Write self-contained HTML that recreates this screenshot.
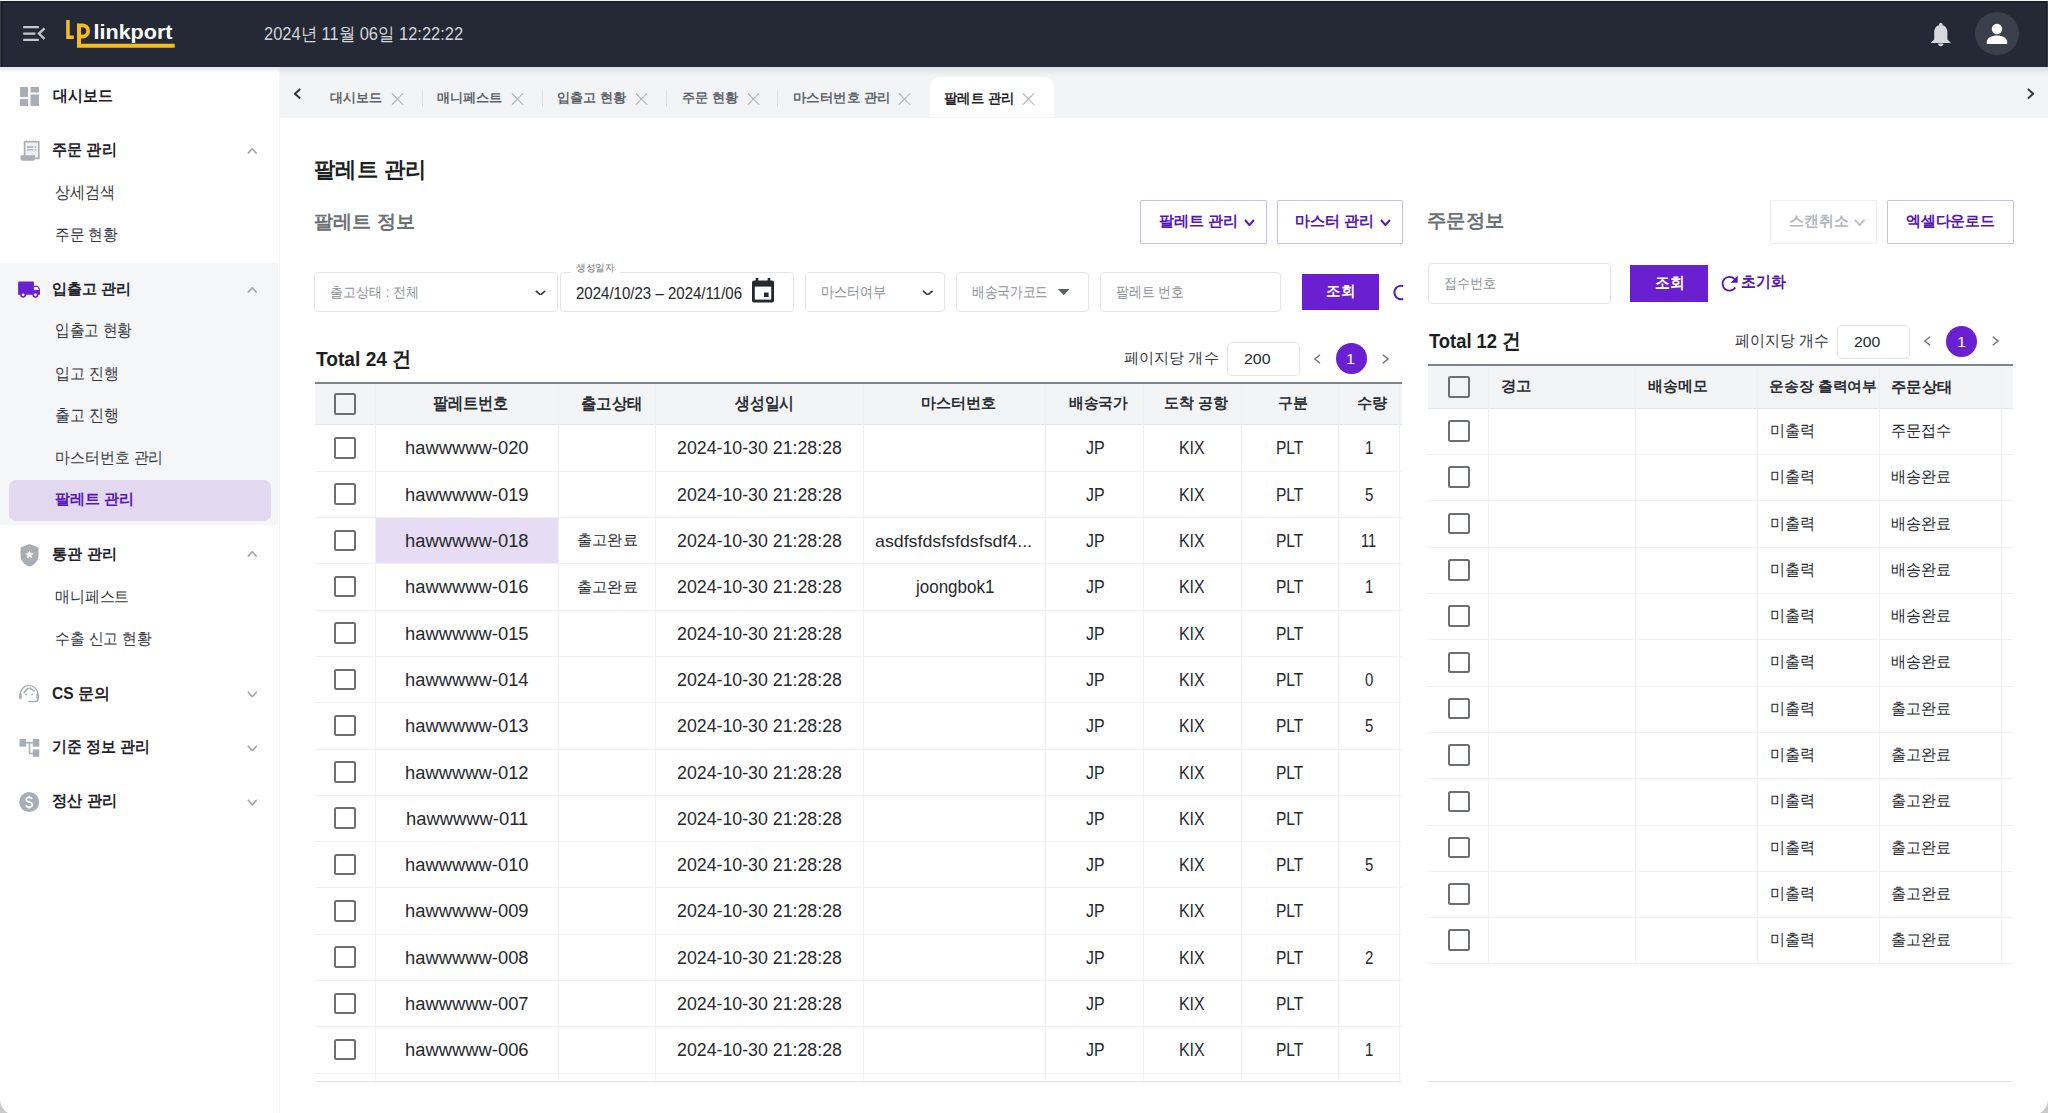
<!DOCTYPE html><html><head><meta charset="utf-8"><style>
*{margin:0;padding:0;box-sizing:border-box}
html,body{width:2048px;height:1113px;overflow:hidden;background:#fff;font-family:"Liberation Sans",sans-serif;color:#222}
.a{position:absolute}
.t{position:absolute;white-space:nowrap;line-height:1;transform-origin:0 0}
.chev{position:absolute;width:8px;height:8px;border-left:1.6px solid #9aa0a8;border-top:1.6px solid #9aa0a8}
.x{position:absolute;width:12px;height:12px}
.x:before,.x:after{content:"";position:absolute;left:5.35px;top:-2px;width:1.3px;height:16px;background:#a9acb1}
.x:before{transform:rotate(45deg)}
.x:after{transform:rotate(-45deg)}
.sep{position:absolute;top:89.5px;width:1px;height:17.5px;background:#dcdfe3}
.box{position:absolute;border:1px solid #e4e5e8;border-radius:4px;background:#fff}
.obtn{position:absolute;border:1px solid #cdbdef;border-radius:1px;background:#fff}
.pbtn{position:absolute;background:#6a1fd0}
.cb{position:absolute;width:21.5px;height:21.5px;border:2.2px solid #6b6e73;border-radius:2.5px}
.hl{position:absolute;height:1px;background:#eef0f2}
.vl{position:absolute;width:1px;background:#eff0f2}
</style></head><body>
<div class="a" style="left:0;top:1px;width:2048px;height:66px;background:#242935"></div>
<div class="a" style="left:1px;top:1px;width:1.5px;height:66px;background:#1a1e26"></div>
<svg class="a" style="left:22px;top:24px" width="24" height="20" viewBox="0 0 24 20"><g fill="none" stroke="#c4c7cc" stroke-width="2.3"><path d="M1.2 3.2h15.6M1.2 9.6h12.2M1.2 15.8h15.6"/><path d="M22.5 4.3l-5.6 5.3 5.6 5.3"/></g></svg>
<svg class="a" style="left:60px;top:12px" width="120" height="40" viewBox="0 0 120 40"><path d="M6.2 7.9h3.5v15.6h4.1v3.5H6.2z" fill="#f5bd22"/><path d="M17 11.4h5.5a7.5 7.5 0 0 1 0 15h-1.5v-3.8h1.5a3.7 3.7 0 0 0 0-7.4H21v16.5h93.7v4.1H17z" fill="#f5bd22"/><text x="33.5" y="27" font-family="Liberation Sans" font-weight="bold" font-size="20.5" fill="#fff" textLength="79" lengthAdjust="spacingAndGlyphs">linkport</text></svg>
<svg class="a" style="left:1930px;top:22px" width="22" height="25" viewBox="0 0 22 25"><circle cx="10.8" cy="2.4" r="1.7" fill="#d6d8db"/><path d="M10.8 3c-4.2 0-6.6 3.2-6.6 7.2v7.3L1 20.4v.6h19.6v-.6l-3.2-2.9v-7.3C17.4 6.2 15 3 10.8 3z" fill="#d6d8db"/><path d="M8.2 21.6h5.2a2.6 2.6 0 0 1-5.2 0z" fill="#d6d8db"/></svg>
<div class="a" style="left:1975px;top:11.5px;width:43.5px;height:43.5px;border-radius:50%;background:#3a3f49"></div>
<svg class="a" style="left:1985px;top:22px" width="24" height="24" viewBox="0 0 24 24"><circle cx="12" cy="7" r="5.2" fill="#fff"/><path d="M1.8 22V20c0-4.6 5-6.6 10.2-6.6S22.2 15.4 22.2 20v2z" fill="#fff"/></svg>
<div class="a" style="left:0;top:67px;width:280px;height:1046px;background:#fff"></div>
<div class="a" style="left:278.5px;top:67px;width:1.5px;height:1046px;background:#f5f6f7"></div>
<div class="a" style="left:0;top:262.5px;width:278px;height:262.5px;background:#f5f6f8"></div>
<div class="a" style="left:9.3px;top:479.8px;width:261.4px;height:41.2px;border-radius:7px;background:#e2d8f0"></div>
<svg class="a" style="left:20px;top:87px" width="19" height="19" viewBox="0 0 19 19" fill="#a8adb6"><rect x="0" y="0" width="8" height="10"/><rect x="10.5" y="0" width="8.5" height="5.5"/><rect x="10.5" y="7.5" width="8.5" height="11.5"/><rect x="0" y="12" width="8" height="7"/></svg>
<svg class="a" style="left:19.5px;top:140px" width="20" height="22" viewBox="0 0 20 22"><path d="M4.6 1.8h14.2v16.6H4.6z" fill="#eef0f3" stroke="#a8adb6" stroke-width="1.6"/><path d="M6 1h1.2M9 1h1.2M12 1h1.2M15 1h1.2" stroke="#a8adb6" stroke-width="1"/><path d="M7 7h6.2M7 9.8h6.2" stroke="#a8adb6" stroke-width="1.3"/><path d="M14.6 7h1.4M14.6 9.8h1.4" stroke="#a8adb6" stroke-width="1.3"/><path d="M0.6 15.2h14.4v3.6c0 1.2-.8 1.9-1.9 1.9H2.5c-1.2 0-1.9-.8-1.9-1.9z" fill="#a8adb6"/></svg>
<svg class="a" style="left:17px;top:280px" width="25" height="19" viewBox="0 0 25 19" fill="#6a1fd0"><path d="M1.1 2.9a1.4 1.4 0 0 1 1.4-1.4h14.4v13.3H1.1z"/><path d="M16.9 5.8h4l2.1 3.2v5.8h-6.1z"/><path d="M17.2 6.9h3.2l2 3.1h-5.2z" fill="#fff"/><circle cx="6.1" cy="14.8" r="3"/><circle cx="6.1" cy="14.8" r="1.4" fill="#fff"/><circle cx="18.4" cy="14.8" r="3"/><circle cx="18.4" cy="14.8" r="1.4" fill="#fff"/></svg>
<svg class="a" style="left:19.8px;top:544px" width="19" height="23" viewBox="0 0 19 23"><path d="M9.5 0L18.5 3.6v7.4c0 5.5-3.8 10.2-9 11.6C4.3 21.2.5 16.5.5 11V3.6z" fill="#a8adb6"/><path d="M9.5 6.3l1.3 2.8 3 .3-2.3 2 .7 3-2.7-1.6-2.7 1.6.7-3-2.3-2 3-.3z" fill="#fff"/></svg>
<svg class="a" style="left:17px;top:682px" width="24" height="22" viewBox="0 0 24 22" fill="none"><path d="M3.35 14.5V12.05A8.7 8.7 0 0 1 20.75 12.05V17.6Q20.75 19.5 18.85 19.5H11.3" stroke="#a8adb6" stroke-width="1.4"/><rect x="2.1" y="11.2" width="2.6" height="6" rx="1.2" fill="#a8adb6"/><rect x="19.4" y="11.2" width="2.6" height="6" rx="1.2" fill="#a8adb6"/><path d="M6.6 10.8L11.6 5.8M12.6 5.8L17.6 9.4" stroke="#a8adb6" stroke-width="1.7"/><circle cx="9" cy="12.4" r="0.95" fill="#a8adb6"/><circle cx="15.1" cy="12.4" r="0.95" fill="#a8adb6"/></svg>
<svg class="a" style="left:18.7px;top:739px" width="21" height="18" viewBox="0 0 21 18" fill="#a8adb6"><rect x="0.5" y="0" width="6.6" height="7.7"/><rect x="13.8" y="0" width="6.5" height="7.7"/><rect x="13.8" y="10.4" width="6.5" height="7.4"/><path d="M7.1 3.8H13.8M10.5 3.8V14.4H13.8" stroke="#a8adb6" stroke-width="1.5" fill="none"/></svg>
<svg class="a" style="left:18.7px;top:792.2px" width="21" height="21" viewBox="0 0 21 21"><circle cx="10.2" cy="10.1" r="10" fill="#a8adb6"/><path d="M13.2 6.9c-.5-.9-1.6-1.5-3-1.5-1.8 0-3 .9-3 2.3 0 3 6.2 1.6 6.2 4.9 0 1.5-1.3 2.5-3.2 2.5-1.5 0-2.8-.7-3.3-1.8M10.2 3.8v1.6M10.2 15.1v1.6" stroke="#fff" stroke-width="1.7" fill="none"/></svg>
<svg class="a" style="left:246.8px;top:147.8px" width="10.4" height="6.4" viewBox="0 0 10.4 6.4"><path d="M0.8 5.6000000000000005L5.2 0.8L9.6 5.6000000000000005" fill="none" stroke="#9ea3ab" stroke-width="1.6"/></svg>
<svg class="a" style="left:246.8px;top:287px" width="10.4" height="6.4" viewBox="0 0 10.4 6.4"><path d="M0.8 5.6000000000000005L5.2 0.8L9.6 5.6000000000000005" fill="none" stroke="#9ea3ab" stroke-width="1.6"/></svg>
<svg class="a" style="left:246.8px;top:551px" width="10.4" height="6.4" viewBox="0 0 10.4 6.4"><path d="M0.8 5.6000000000000005L5.2 0.8L9.6 5.6000000000000005" fill="none" stroke="#9ea3ab" stroke-width="1.6"/></svg>
<svg class="a" style="left:246.6px;top:690.5px" width="10.6" height="6.6" viewBox="0 0 10.6 6.6"><path d="M0.8 0.8L5.3 5.8L9.799999999999999 0.8" fill="none" stroke="#9ea3ab" stroke-width="1.6"/></svg>
<svg class="a" style="left:246.6px;top:744.8px" width="10.6" height="6.6" viewBox="0 0 10.6 6.6"><path d="M0.8 0.8L5.3 5.8L9.799999999999999 0.8" fill="none" stroke="#9ea3ab" stroke-width="1.6"/></svg>
<svg class="a" style="left:246.6px;top:799px" width="10.6" height="6.6" viewBox="0 0 10.6 6.6"><path d="M0.8 0.8L5.3 5.8L9.799999999999999 0.8" fill="none" stroke="#9ea3ab" stroke-width="1.6"/></svg>
<div class="a" style="left:280px;top:67px;width:1768px;height:50.5px;background:#f3f4f6"></div>
<div class="a" style="left:280px;top:67px;width:1768px;height:9px;background:linear-gradient(#dcdfe3,rgba(243,244,246,0))"></div>
<div class="a" style="left:0;top:67px;width:280px;height:6px;background:linear-gradient(#e3e5e8,rgba(255,255,255,0))"></div>
<svg class="a" style="left:293.5px;top:87.7px" width="7.2" height="11.5" viewBox="0 0 7.2 11.5"><path d="M6.25 0.95L0.95 5.75L6.25 10.55" fill="none" stroke="#2f3338" stroke-width="1.9"/></svg>
<svg class="a" style="left:2027.3px;top:87.7px" width="7.2" height="11.5" viewBox="0 0 7.2 11.5"><path d="M0.95 0.95L6.25 5.75L0.95 10.55" fill="none" stroke="#2f3338" stroke-width="1.9"/></svg>
<div class="a" style="left:929.8px;top:77.1px;width:124.6px;height:40.4px;background:#fff;border-radius:9px 9px 0 0"></div>
<div class="x" style="left:391.2px;top:93px"></div>
<div class="x" style="left:511.20000000000005px;top:93px"></div>
<div class="x" style="left:636px;top:93px"></div>
<div class="x" style="left:747.2px;top:93px"></div>
<div class="x" style="left:898.3px;top:93px"></div>
<div class="x" style="left:1022.9000000000001px;top:93px"></div>
<div class="sep" style="left:421.5px"></div>
<div class="sep" style="left:541.8px"></div>
<div class="sep" style="left:666.2px"></div>
<div class="sep" style="left:777.3px"></div>
<div class="obtn" style="left:1140.3px;top:199.8px;width:126.4px;height:43.8px"></div>
<div class="obtn" style="left:1276.6px;top:199.8px;width:126.8px;height:43.8px"></div>
<div class="obtn" style="left:1769.6px;top:200px;width:107.9px;height:43.7px;border-color:#eceef1"></div>
<div class="obtn" style="left:1887px;top:200px;width:127px;height:43.7px"></div>
<svg class="a" style="left:1244.2px;top:218.7px" width="10.9" height="7.1" viewBox="0 0 10.9 7.1"><path d="M1.0 1.0L5.45 6.1L9.9 1.0" fill="none" stroke="#5516b8" stroke-width="2"/></svg>
<svg class="a" style="left:1380.2px;top:218.7px" width="10.9" height="7.1" viewBox="0 0 10.9 7.1"><path d="M1.0 1.0L5.45 6.1L9.9 1.0" fill="none" stroke="#5516b8" stroke-width="2"/></svg>
<svg class="a" style="left:1853.9px;top:218.5px" width="11.4" height="7" viewBox="0 0 11.4 7"><path d="M0.9 0.9L5.7 6.1L10.5 0.9" fill="none" stroke="#b9bcc1" stroke-width="1.8"/></svg>
<div class="box" style="left:314.3px;top:271.6px;width:243.4px;height:40.8px"></div>
<svg class="a" style="left:534.5px;top:289.7px" width="11" height="5.8" viewBox="0 0 11 5.8"><path d="M0.85 0.85L5.5 4.95L10.15 0.85" fill="none" stroke="#3a3e44" stroke-width="1.7"/></svg>
<div class="box" style="left:559.6px;top:271.6px;width:234.9px;height:40.8px"></div>
<div class="a" style="left:571px;top:266px;width:49px;height:9px;background:#fff"></div>
<svg class="a" style="left:751.8px;top:278.2px" width="22" height="25" viewBox="0 0 22 25"><path d="M5 0v4M17 0v4" stroke="#25282d" stroke-width="2.6"/><rect x="0" y="2.6" width="22" height="21.8" rx="2" fill="#25282d"/><rect x="2.8" y="8.6" width="16.4" height="13" fill="#fff"/><rect x="12" y="14.5" width="4.6" height="4.6" fill="#25282d"/></svg>
<div class="box" style="left:804.8px;top:271.6px;width:140.3px;height:40.8px"></div>
<svg class="a" style="left:921.5px;top:289.7px" width="11.5" height="5.8" viewBox="0 0 11.5 5.8"><path d="M0.85 0.85L5.75 4.95L10.65 0.85" fill="none" stroke="#3a3e44" stroke-width="1.7"/></svg>
<div class="box" style="left:955.6px;top:271.6px;width:133.6px;height:40.8px"></div>
<svg class="a" style="left:1058.2px;top:289.2px" width="11.5" height="6.3" viewBox="0 0 11.5 6.3"><path d="M0 0h11.5L5.75 6.3z" fill="#5c6067"/></svg>
<div class="box" style="left:1099.7px;top:271.6px;width:181.6px;height:40.8px"></div>
<div class="pbtn" style="left:1302px;top:274px;width:77.3px;height:36.4px"></div>
<svg class="a" style="left:1391.5px;top:283.8px" width="12" height="17" viewBox="0 0 12 17"><path d="M11.2 2A6.8 6.8 0 1 0 11.2 15" fill="none" stroke="#5520b8" stroke-width="2"/></svg>
<div class="box" style="left:1427.7px;top:263px;width:183px;height:41px"></div>
<div class="pbtn" style="left:1630px;top:265.1px;width:77.6px;height:36.8px"></div>
<svg class="a" style="left:1721px;top:275px" width="18" height="17" viewBox="0 0 18 17"><path d="M13.4 3.9A6.9 6.9 0 1 0 14.3 12.4" fill="none" stroke="#5516b8" stroke-width="1.8"/><path d="M16.7 0.6V7.7H9.6z" fill="#5516b8"/></svg>
<div class="box" style="left:1227.2px;top:341.7px;width:72.5px;height:34.0px;border-radius:5px"></div>
<svg class="a" style="left:1313.9px;top:354.1px" width="6.8" height="10" viewBox="0 0 6.8 10"><path d="M6.05 0.75L0.75 5.0L6.05 9.25" fill="none" stroke="#6f737a" stroke-width="1.5"/></svg>
<div class="a" style="left:1335.6px;top:342.6px;width:31.4px;height:31.4px;border-radius:50%;background:#6a1fd0"></div>
<svg class="a" style="left:1382.4px;top:354.1px" width="6.8" height="10" viewBox="0 0 6.8 10"><path d="M0.75 0.75L6.05 5.0L0.75 9.25" fill="none" stroke="#6f737a" stroke-width="1.5"/></svg>
<div class="box" style="left:1837.3px;top:325.3px;width:73.1px;height:33.3px;border-radius:5px"></div>
<svg class="a" style="left:1924.4px;top:336.3px" width="6.8" height="10" viewBox="0 0 6.8 10"><path d="M6.05 0.75L0.75 5.0L6.05 9.25" fill="none" stroke="#6f737a" stroke-width="1.5"/></svg>
<div class="a" style="left:1946.1px;top:325.8px;width:31.4px;height:31.4px;border-radius:50%;background:#6a1fd0"></div>
<svg class="a" style="left:1991.9px;top:336.3px" width="6.8" height="10" viewBox="0 0 6.8 10"><path d="M0.75 0.75L6.05 5.0L0.75 9.25" fill="none" stroke="#6f737a" stroke-width="1.5"/></svg>
<div class="a" style="left:314.5px;top:381.8px;width:1087.9px;height:2px;background:#7f858e"></div>
<div class="a" style="left:314.5px;top:383.8px;width:1087.9px;height:40.6px;background:#f3f4f6"></div>
<div class="hl" style="left:314.5px;top:424.4px;width:1087.9px;background:#e4e6e9"></div>
<div class="a" style="left:375.5px;top:518.0px;width:182.9px;height:45.3px;background:#e6dcf4"></div>
<div class="hl" style="left:314.5px;top:470.7px;width:1087.9px"></div>
<div class="hl" style="left:314.5px;top:517.0px;width:1087.9px"></div>
<div class="hl" style="left:314.5px;top:563.3px;width:1087.9px"></div>
<div class="hl" style="left:314.5px;top:609.6px;width:1087.9px"></div>
<div class="hl" style="left:314.5px;top:655.9px;width:1087.9px"></div>
<div class="hl" style="left:314.5px;top:702.2px;width:1087.9px"></div>
<div class="hl" style="left:314.5px;top:748.5px;width:1087.9px"></div>
<div class="hl" style="left:314.5px;top:794.8px;width:1087.9px"></div>
<div class="hl" style="left:314.5px;top:841.1px;width:1087.9px"></div>
<div class="hl" style="left:314.5px;top:887.4px;width:1087.9px"></div>
<div class="hl" style="left:314.5px;top:933.7px;width:1087.9px"></div>
<div class="hl" style="left:314.5px;top:980.0px;width:1087.9px"></div>
<div class="hl" style="left:314.5px;top:1026.3px;width:1087.9px"></div>
<div class="hl" style="left:314.5px;top:1072.6px;width:1087.9px"></div>
<div class="vl" style="left:375.0px;top:383.8px;height:697.4px"></div>
<div class="vl" style="left:557.9px;top:383.8px;height:697.4px"></div>
<div class="vl" style="left:655.3px;top:383.8px;height:697.4px"></div>
<div class="vl" style="left:862.6px;top:383.8px;height:697.4px"></div>
<div class="vl" style="left:1045.3px;top:383.8px;height:697.4px"></div>
<div class="vl" style="left:1142.9px;top:383.8px;height:697.4px"></div>
<div class="vl" style="left:1240.5px;top:383.8px;height:697.4px"></div>
<div class="vl" style="left:1338.2px;top:383.8px;height:697.4px"></div>
<div class="vl" style="left:1399.1px;top:383.8px;height:697.4px"></div>
<div class="a" style="left:314.5px;top:1080.8px;width:1087.9px;height:1.2px;background:#e2e4e7"></div>
<div class="cb" style="left:334.3px;top:393.1px"></div>
<div class="cb" style="left:334.3px;top:437.0px"></div>
<div class="cb" style="left:334.3px;top:483.3px"></div>
<div class="cb" style="left:334.3px;top:529.6px"></div>
<div class="cb" style="left:334.3px;top:575.9px"></div>
<div class="cb" style="left:334.3px;top:622.2px"></div>
<div class="cb" style="left:334.3px;top:668.5px"></div>
<div class="cb" style="left:334.3px;top:714.8px"></div>
<div class="cb" style="left:334.3px;top:761.1px"></div>
<div class="cb" style="left:334.3px;top:807.4px"></div>
<div class="cb" style="left:334.3px;top:853.7px"></div>
<div class="cb" style="left:334.3px;top:900.0px"></div>
<div class="cb" style="left:334.3px;top:946.3px"></div>
<div class="cb" style="left:334.3px;top:992.6px"></div>
<div class="cb" style="left:334.3px;top:1038.9px"></div>
<div class="a" style="left:1427.7px;top:363.9px;width:585.7px;height:2px;background:#7f858e"></div>
<div class="a" style="left:1427.7px;top:365.9px;width:585.7px;height:41.9px;background:#f3f4f6"></div>
<div class="hl" style="left:1427.7px;top:407.8px;width:585.7px;background:#e4e6e9"></div>
<div class="hl" style="left:1427.7px;top:454.1px;width:585.7px"></div>
<div class="hl" style="left:1427.7px;top:500.4px;width:585.7px"></div>
<div class="hl" style="left:1427.7px;top:546.7px;width:585.7px"></div>
<div class="hl" style="left:1427.7px;top:593.0px;width:585.7px"></div>
<div class="hl" style="left:1427.7px;top:639.3px;width:585.7px"></div>
<div class="hl" style="left:1427.7px;top:685.6px;width:585.7px"></div>
<div class="hl" style="left:1427.7px;top:731.9px;width:585.7px"></div>
<div class="hl" style="left:1427.7px;top:778.2px;width:585.7px"></div>
<div class="hl" style="left:1427.7px;top:824.5px;width:585.7px"></div>
<div class="hl" style="left:1427.7px;top:870.8px;width:585.7px"></div>
<div class="hl" style="left:1427.7px;top:917.1px;width:585.7px"></div>
<div class="hl" style="left:1427.7px;top:963.4px;width:585.7px"></div>
<div class="vl" style="left:1488.4px;top:365.9px;height:597.5px"></div>
<div class="vl" style="left:1634.8px;top:365.9px;height:597.5px"></div>
<div class="vl" style="left:1756.6px;top:365.9px;height:597.5px"></div>
<div class="vl" style="left:1878.5px;top:365.9px;height:597.5px"></div>
<div class="vl" style="left:2001.1px;top:365.9px;height:597.5px"></div>
<div class="a" style="left:1427.7px;top:1080.8px;width:585.7px;height:1.2px;background:#e2e4e7"></div>
<div class="cb" style="left:1448px;top:376.1px"></div>
<div class="cb" style="left:1448px;top:420.1px"></div>
<div class="cb" style="left:1448px;top:466.4px"></div>
<div class="cb" style="left:1448px;top:512.7px"></div>
<div class="cb" style="left:1448px;top:559.0px"></div>
<div class="cb" style="left:1448px;top:605.3px"></div>
<div class="cb" style="left:1448px;top:651.6px"></div>
<div class="cb" style="left:1448px;top:697.9px"></div>
<div class="cb" style="left:1448px;top:744.2px"></div>
<div class="cb" style="left:1448px;top:790.5px"></div>
<div class="cb" style="left:1448px;top:836.8px"></div>
<div class="cb" style="left:1448px;top:883.1px"></div>
<div class="cb" style="left:1448px;top:929.4px"></div>
<div class="t" style="left:263.79px;top:25.30px;font-size:18.1px;font-weight:400;color:#d3d6da;transform:scaleX(0.9106)">2024년 11월 06일 12:22:22</div>
<div class="t" style="left:53.20px;top:87.85px;font-size:16.0px;font-weight:700;color:#1f2329;transform:scaleX(0.9302)">대시보드</div>
<div class="t" style="left:52.35px;top:142.00px;font-size:15.9px;font-weight:700;color:#1f2329;transform:scaleX(0.9462)">주문 관리</div>
<div class="t" style="left:52.30px;top:280.65px;font-size:15.1px;font-weight:700;color:#1f2329;transform:scaleX(1.0039)">입출고 관리</div>
<div class="t" style="left:52.29px;top:545.50px;font-size:15.3px;font-weight:700;color:#1f2329;transform:scaleX(1.0082)">통관 관리</div>
<div class="t" style="left:52.20px;top:685.85px;font-size:15.6px;font-weight:700;color:#1f2329;transform:scaleX(0.9982)">CS 문의</div>
<div class="t" style="left:52.27px;top:739.45px;font-size:16.0px;font-weight:700;color:#1f2329;transform:scaleX(0.9294)">기준 정보 관리</div>
<div class="t" style="left:52.25px;top:793.35px;font-size:16.0px;font-weight:700;color:#1f2329;transform:scaleX(0.9508)">정산 관리</div>
<div class="t" style="left:55.12px;top:183.90px;font-size:17.1px;font-weight:400;color:#34383e;transform:scaleX(0.8846)">상세검색</div>
<div class="t" style="left:55.08px;top:225.95px;font-size:16.3px;font-weight:400;color:#34383e;transform:scaleX(0.9162)">주문 현황</div>
<div class="t" style="left:55.14px;top:322.20px;font-size:16.5px;font-weight:400;color:#34383e;transform:scaleX(0.8607)">입출고 현황</div>
<div class="t" style="left:55.07px;top:364.55px;font-size:16.3px;font-weight:400;color:#34383e;transform:scaleX(0.9333)">입고 진행</div>
<div class="t" style="left:55.12px;top:406.50px;font-size:17.1px;font-weight:400;color:#34383e;transform:scaleX(0.8800)">출고 진행</div>
<div class="t" style="left:55.07px;top:448.55px;font-size:16.3px;font-weight:400;color:#34383e;transform:scaleX(0.9298)">마스터번호 관리</div>
<div class="t" style="left:55.00px;top:491.45px;font-size:15.3px;font-weight:700;color:#5516b8;transform:scaleX(1.0000)">팔레트 관리</div>
<div class="t" style="left:55.07px;top:588.55px;font-size:15.7px;font-weight:400;color:#34383e;transform:scaleX(0.9295)">매니페스트</div>
<div class="t" style="left:55.08px;top:629.55px;font-size:16.3px;font-weight:400;color:#34383e;transform:scaleX(0.9212)">수출 신고 현황</div>
<div class="t" style="left:329.80px;top:91.75px;font-size:12.5px;font-weight:700;color:#5f646b;transform:scaleX(0.9961)">대시보드</div>
<div class="t" style="left:437.20px;top:91.75px;font-size:12.5px;font-weight:700;color:#5f646b;transform:scaleX(1.0078)">매니페스트</div>
<div class="t" style="left:557.29px;top:91.75px;font-size:12.5px;font-weight:700;color:#5f646b;transform:scaleX(1.0104)">입출고 현황</div>
<div class="t" style="left:681.69px;top:91.70px;font-size:12.6px;font-weight:700;color:#5f646b;transform:scaleX(1.0130)">주문 현황</div>
<div class="t" style="left:792.97px;top:91.70px;font-size:12.6px;font-weight:700;color:#5f646b;transform:scaleX(1.0308)">마스터번호 관리</div>
<div class="t" style="left:944.05px;top:91.70px;font-size:13.6px;font-weight:700;color:#1f2329;transform:scaleX(0.9549)">팔레트 관리</div>
<div class="t" style="left:314.33px;top:158.60px;font-size:22.3px;font-weight:700;color:#1b1e23;transform:scaleX(0.9679)">팔레트 관리</div>
<div class="t" style="left:314.29px;top:211.90px;font-size:19.3px;font-weight:700;color:#6b7076;transform:scaleX(1.0051)">팔레트 정보</div>
<div class="t" style="left:1426.69px;top:211.25px;font-size:19.4px;font-weight:700;color:#6b7076;transform:scaleX(1.0149)">주문정보</div>
<div class="t" style="left:1158.80px;top:213.30px;font-size:15.4px;font-weight:700;color:#5516b8;transform:scaleX(1.0026)">팔레트 관리</div>
<div class="t" style="left:1295.00px;top:213.30px;font-size:15.4px;font-weight:700;color:#5516b8;transform:scaleX(1.0000)">마스터 관리</div>
<div class="t" style="left:1788.51px;top:213.90px;font-size:14.7px;font-weight:700;color:#b3b6bb;transform:scaleX(0.9897)">스캔취소</div>
<div class="t" style="left:1906.01px;top:214.00px;font-size:14.9px;font-weight:700;color:#5516b8;transform:scaleX(0.9886)">엑셀다운로드</div>
<div class="t" style="left:330.47px;top:284.50px;font-size:14px;font-weight:400;color:#8d9197;transform:scaleX(0.9290)">출고상태 : 전체</div>
<div class="t" style="left:576.24px;top:262.55px;font-size:10.1px;font-weight:400;color:#707479;transform:scaleX(0.9632)">생성일자</div>
<div class="t" style="left:576.24px;top:285.60px;font-size:15.7px;font-weight:400;color:#23262b;transform:scaleX(0.9581)">2024/10/23 – 2024/11/06</div>
<div class="t" style="left:820.53px;top:284.35px;font-size:15.3px;font-weight:400;color:#8d9197;transform:scaleX(0.8685)">마스터여부</div>
<div class="t" style="left:971.86px;top:284.35px;font-size:15.3px;font-weight:400;color:#8d9197;transform:scaleX(0.8443)">배송국가코드</div>
<div class="t" style="left:1115.94px;top:284.35px;font-size:15.3px;font-weight:400;color:#8d9197;transform:scaleX(0.8558)">팔레트 번호</div>
<div class="t" style="left:1326.23px;top:284.10px;font-size:14.8px;font-weight:700;color:#ffffff;transform:scaleX(0.9667)">조회</div>
<div class="t" style="left:1443.56px;top:275.55px;font-size:14.4px;font-weight:400;color:#8d9197;transform:scaleX(0.9352)">접수번호</div>
<div class="t" style="left:1654.58px;top:274.75px;font-size:15.8px;font-weight:700;color:#ffffff;transform:scaleX(0.9207)">조회</div>
<div class="t" style="left:1741.07px;top:273.40px;font-size:16.4px;font-weight:700;color:#5516b8;transform:scaleX(0.9255)">초기화</div>
<div class="t" style="left:315.90px;top:348.55px;font-size:20.9px;font-weight:700;color:#1b1e23;transform:scaleX(0.9167)">Total 24 건</div>
<div class="t" style="left:1123.60px;top:350.10px;font-size:15.1px;font-weight:400;color:#34383e;transform:scaleX(1.0043)">페이지당 개수</div>
<div class="t" style="left:1243.77px;top:350.85px;font-size:15.5px;font-weight:400;color:#26292e;transform:scaleX(1.0250)">200</div>
<div class="t" style="left:1345.50px;top:351.90px;font-size:14.7px;font-weight:400;color:#ffffff;transform:scaleX(1.1000)">1</div>
<div class="t" style="left:1429.10px;top:331.45px;font-size:20.6px;font-weight:700;color:#1b1e23;transform:scaleX(0.8921)">Total 12 건</div>
<div class="t" style="left:1734.97px;top:333.20px;font-size:15.5px;font-weight:400;color:#34383e;transform:scaleX(0.9347)">페이지당 개수</div>
<div class="t" style="left:1854.47px;top:334.10px;font-size:15.3px;font-weight:400;color:#26292e;transform:scaleX(1.0292)">200</div>
<div class="t" style="left:1957.00px;top:335.10px;font-size:14.7px;font-weight:400;color:#ffffff;transform:scaleX(1.1000)">1</div>
<div class="t" style="left:433.11px;top:395.80px;font-size:16.6px;font-weight:700;color:#2a2d33;transform:scaleX(0.8892)">팔레트번호</div>
<div class="t" style="left:580.64px;top:395.80px;font-size:15.6px;font-weight:700;color:#2a2d33;transform:scaleX(0.9639)">출고상태</div>
<div class="t" style="left:734.80px;top:395.80px;font-size:16.6px;font-weight:700;color:#2a2d33;transform:scaleX(0.8697)">생성일시</div>
<div class="t" style="left:920.59px;top:395.00px;font-size:15.1px;font-weight:700;color:#2a2d33;transform:scaleX(1.0055)">마스터번호</div>
<div class="t" style="left:1068.62px;top:395.00px;font-size:15.1px;font-weight:700;color:#2a2d33;transform:scaleX(0.9814)">배송국가</div>
<div class="t" style="left:1163.50px;top:395.00px;font-size:15.1px;font-weight:700;color:#2a2d33;transform:scaleX(0.9984)">도착 공항</div>
<div class="t" style="left:1278.30px;top:394.50px;font-size:15.1px;font-weight:700;color:#2a2d33;transform:scaleX(0.9964)">구분</div>
<div class="t" style="left:1356.99px;top:394.50px;font-size:15.1px;font-weight:700;color:#2a2d33;transform:scaleX(1.0103)">수량</div>
<div class="t" style="left:1500.67px;top:378.60px;font-size:14.5px;font-weight:700;color:#2a2d33;transform:scaleX(1.0286)">경고</div>
<div class="t" style="left:1647.61px;top:379.10px;font-size:14.5px;font-weight:700;color:#2a2d33;transform:scaleX(0.9914)">배송메모</div>
<div class="t" style="left:1768.94px;top:379.00px;font-size:14.4px;font-weight:700;color:#2a2d33;transform:scaleX(1.0600)">운송장 출력여부</div>
<div class="t" style="left:1890.78px;top:378.50px;font-size:15.4px;font-weight:700;color:#2a2d33;transform:scaleX(1.0228)">주문상태</div>
<div class="t" style="left:404.81px;top:440.40px;font-size:17.6px;font-weight:400;color:#26292e;transform:scaleX(1.0444)">hawwwww-020</div>
<div class="t" style="left:676.69px;top:440.40px;font-size:17.6px;font-weight:400;color:#26292e;transform:scaleX(1.0093)">2024-10-30 21:28:28</div>
<div class="t" style="left:1085.70px;top:440.40px;font-size:17.6px;font-weight:400;color:#26292e;transform:scaleX(0.9050)">JP</div>
<div class="t" style="left:1179.40px;top:440.40px;font-size:17.6px;font-weight:400;color:#26292e;transform:scaleX(0.9037)">KIX</div>
<div class="t" style="left:1275.72px;top:440.40px;font-size:17.6px;font-weight:400;color:#26292e;transform:scaleX(0.8833)">PLT</div>
<div class="t" style="left:1365.00px;top:440.40px;font-size:17.6px;font-weight:400;color:#26292e;transform:scaleX(0.8500)">1</div>
<div class="t" style="left:404.81px;top:486.70px;font-size:17.6px;font-weight:400;color:#26292e;transform:scaleX(1.0444)">hawwwww-019</div>
<div class="t" style="left:676.69px;top:486.70px;font-size:17.6px;font-weight:400;color:#26292e;transform:scaleX(1.0093)">2024-10-30 21:28:28</div>
<div class="t" style="left:1085.70px;top:486.70px;font-size:17.6px;font-weight:400;color:#26292e;transform:scaleX(0.9050)">JP</div>
<div class="t" style="left:1179.40px;top:486.70px;font-size:17.6px;font-weight:400;color:#26292e;transform:scaleX(0.9037)">KIX</div>
<div class="t" style="left:1275.72px;top:486.70px;font-size:17.6px;font-weight:400;color:#26292e;transform:scaleX(0.8833)">PLT</div>
<div class="t" style="left:1365.00px;top:486.70px;font-size:17.6px;font-weight:400;color:#26292e;transform:scaleX(0.8500)">5</div>
<div class="t" style="left:404.81px;top:533.00px;font-size:17.6px;font-weight:400;color:#26292e;transform:scaleX(1.0444)">hawwwww-018</div>
<div class="t" style="left:576.63px;top:532.30px;font-size:15.3px;font-weight:400;color:#26292e;transform:scaleX(1.0155)">출고완료</div>
<div class="t" style="left:676.69px;top:533.00px;font-size:17.6px;font-weight:400;color:#26292e;transform:scaleX(1.0093)">2024-10-30 21:28:28</div>
<div class="t" style="left:874.95px;top:532.50px;font-size:17px;font-weight:400;color:#26292e;transform:scaleX(1.0453)">asdfsfdsfsfdsfsdf4...</div>
<div class="t" style="left:1085.70px;top:533.00px;font-size:17.6px;font-weight:400;color:#26292e;transform:scaleX(0.9050)">JP</div>
<div class="t" style="left:1179.40px;top:533.00px;font-size:17.6px;font-weight:400;color:#26292e;transform:scaleX(0.9037)">KIX</div>
<div class="t" style="left:1275.72px;top:533.00px;font-size:17.6px;font-weight:400;color:#26292e;transform:scaleX(0.8833)">PLT</div>
<div class="t" style="left:1361.37px;top:533.00px;font-size:17.6px;font-weight:400;color:#26292e;transform:scaleX(0.8294)">11</div>
<div class="t" style="left:404.81px;top:579.30px;font-size:17.6px;font-weight:400;color:#26292e;transform:scaleX(1.0444)">hawwwww-016</div>
<div class="t" style="left:576.63px;top:578.60px;font-size:15.3px;font-weight:400;color:#26292e;transform:scaleX(1.0155)">출고완료</div>
<div class="t" style="left:676.69px;top:579.30px;font-size:17.6px;font-weight:400;color:#26292e;transform:scaleX(1.0093)">2024-10-30 21:28:28</div>
<div class="t" style="left:915.70px;top:579.30px;font-size:17.6px;font-weight:400;color:#26292e;transform:scaleX(0.9654)">joongbok1</div>
<div class="t" style="left:1085.70px;top:579.30px;font-size:17.6px;font-weight:400;color:#26292e;transform:scaleX(0.9050)">JP</div>
<div class="t" style="left:1179.40px;top:579.30px;font-size:17.6px;font-weight:400;color:#26292e;transform:scaleX(0.9037)">KIX</div>
<div class="t" style="left:1275.72px;top:579.30px;font-size:17.6px;font-weight:400;color:#26292e;transform:scaleX(0.8833)">PLT</div>
<div class="t" style="left:1365.00px;top:579.30px;font-size:17.6px;font-weight:400;color:#26292e;transform:scaleX(0.8500)">1</div>
<div class="t" style="left:404.81px;top:625.60px;font-size:17.6px;font-weight:400;color:#26292e;transform:scaleX(1.0444)">hawwwww-015</div>
<div class="t" style="left:676.69px;top:625.60px;font-size:17.6px;font-weight:400;color:#26292e;transform:scaleX(1.0093)">2024-10-30 21:28:28</div>
<div class="t" style="left:1085.70px;top:625.60px;font-size:17.6px;font-weight:400;color:#26292e;transform:scaleX(0.9050)">JP</div>
<div class="t" style="left:1179.40px;top:625.60px;font-size:17.6px;font-weight:400;color:#26292e;transform:scaleX(0.9037)">KIX</div>
<div class="t" style="left:1275.72px;top:625.60px;font-size:17.6px;font-weight:400;color:#26292e;transform:scaleX(0.8833)">PLT</div>
<div class="t" style="left:404.81px;top:671.90px;font-size:17.6px;font-weight:400;color:#26292e;transform:scaleX(1.0444)">hawwwww-014</div>
<div class="t" style="left:676.69px;top:671.90px;font-size:17.6px;font-weight:400;color:#26292e;transform:scaleX(1.0093)">2024-10-30 21:28:28</div>
<div class="t" style="left:1085.70px;top:671.90px;font-size:17.6px;font-weight:400;color:#26292e;transform:scaleX(0.9050)">JP</div>
<div class="t" style="left:1179.40px;top:671.90px;font-size:17.6px;font-weight:400;color:#26292e;transform:scaleX(0.9037)">KIX</div>
<div class="t" style="left:1275.72px;top:671.90px;font-size:17.6px;font-weight:400;color:#26292e;transform:scaleX(0.8833)">PLT</div>
<div class="t" style="left:1365.00px;top:671.90px;font-size:17.6px;font-weight:400;color:#26292e;transform:scaleX(0.8500)">0</div>
<div class="t" style="left:404.81px;top:718.20px;font-size:17.6px;font-weight:400;color:#26292e;transform:scaleX(1.0444)">hawwwww-013</div>
<div class="t" style="left:676.69px;top:718.20px;font-size:17.6px;font-weight:400;color:#26292e;transform:scaleX(1.0093)">2024-10-30 21:28:28</div>
<div class="t" style="left:1085.70px;top:718.20px;font-size:17.6px;font-weight:400;color:#26292e;transform:scaleX(0.9050)">JP</div>
<div class="t" style="left:1179.40px;top:718.20px;font-size:17.6px;font-weight:400;color:#26292e;transform:scaleX(0.9037)">KIX</div>
<div class="t" style="left:1275.72px;top:718.20px;font-size:17.6px;font-weight:400;color:#26292e;transform:scaleX(0.8833)">PLT</div>
<div class="t" style="left:1365.00px;top:718.20px;font-size:17.6px;font-weight:400;color:#26292e;transform:scaleX(0.8500)">5</div>
<div class="t" style="left:404.81px;top:764.50px;font-size:17.6px;font-weight:400;color:#26292e;transform:scaleX(1.0444)">hawwwww-012</div>
<div class="t" style="left:676.69px;top:764.50px;font-size:17.6px;font-weight:400;color:#26292e;transform:scaleX(1.0093)">2024-10-30 21:28:28</div>
<div class="t" style="left:1085.70px;top:764.50px;font-size:17.6px;font-weight:400;color:#26292e;transform:scaleX(0.9050)">JP</div>
<div class="t" style="left:1179.40px;top:764.50px;font-size:17.6px;font-weight:400;color:#26292e;transform:scaleX(0.9037)">KIX</div>
<div class="t" style="left:1275.72px;top:764.50px;font-size:17.6px;font-weight:400;color:#26292e;transform:scaleX(0.8833)">PLT</div>
<div class="t" style="left:405.85px;top:810.80px;font-size:17.6px;font-weight:400;color:#26292e;transform:scaleX(1.0444)">hawwwww-011</div>
<div class="t" style="left:676.69px;top:810.80px;font-size:17.6px;font-weight:400;color:#26292e;transform:scaleX(1.0093)">2024-10-30 21:28:28</div>
<div class="t" style="left:1085.70px;top:810.80px;font-size:17.6px;font-weight:400;color:#26292e;transform:scaleX(0.9050)">JP</div>
<div class="t" style="left:1179.40px;top:810.80px;font-size:17.6px;font-weight:400;color:#26292e;transform:scaleX(0.9037)">KIX</div>
<div class="t" style="left:1275.72px;top:810.80px;font-size:17.6px;font-weight:400;color:#26292e;transform:scaleX(0.8833)">PLT</div>
<div class="t" style="left:404.81px;top:857.10px;font-size:17.6px;font-weight:400;color:#26292e;transform:scaleX(1.0444)">hawwwww-010</div>
<div class="t" style="left:676.69px;top:857.10px;font-size:17.6px;font-weight:400;color:#26292e;transform:scaleX(1.0093)">2024-10-30 21:28:28</div>
<div class="t" style="left:1085.70px;top:857.10px;font-size:17.6px;font-weight:400;color:#26292e;transform:scaleX(0.9050)">JP</div>
<div class="t" style="left:1179.40px;top:857.10px;font-size:17.6px;font-weight:400;color:#26292e;transform:scaleX(0.9037)">KIX</div>
<div class="t" style="left:1275.72px;top:857.10px;font-size:17.6px;font-weight:400;color:#26292e;transform:scaleX(0.8833)">PLT</div>
<div class="t" style="left:1365.00px;top:857.10px;font-size:17.6px;font-weight:400;color:#26292e;transform:scaleX(0.8500)">5</div>
<div class="t" style="left:404.81px;top:903.40px;font-size:17.6px;font-weight:400;color:#26292e;transform:scaleX(1.0444)">hawwwww-009</div>
<div class="t" style="left:676.69px;top:903.40px;font-size:17.6px;font-weight:400;color:#26292e;transform:scaleX(1.0093)">2024-10-30 21:28:28</div>
<div class="t" style="left:1085.70px;top:903.40px;font-size:17.6px;font-weight:400;color:#26292e;transform:scaleX(0.9050)">JP</div>
<div class="t" style="left:1179.40px;top:903.40px;font-size:17.6px;font-weight:400;color:#26292e;transform:scaleX(0.9037)">KIX</div>
<div class="t" style="left:1275.72px;top:903.40px;font-size:17.6px;font-weight:400;color:#26292e;transform:scaleX(0.8833)">PLT</div>
<div class="t" style="left:404.81px;top:949.70px;font-size:17.6px;font-weight:400;color:#26292e;transform:scaleX(1.0444)">hawwwww-008</div>
<div class="t" style="left:676.69px;top:949.70px;font-size:17.6px;font-weight:400;color:#26292e;transform:scaleX(1.0093)">2024-10-30 21:28:28</div>
<div class="t" style="left:1085.70px;top:949.70px;font-size:17.6px;font-weight:400;color:#26292e;transform:scaleX(0.9050)">JP</div>
<div class="t" style="left:1179.40px;top:949.70px;font-size:17.6px;font-weight:400;color:#26292e;transform:scaleX(0.9037)">KIX</div>
<div class="t" style="left:1275.72px;top:949.70px;font-size:17.6px;font-weight:400;color:#26292e;transform:scaleX(0.8833)">PLT</div>
<div class="t" style="left:1365.00px;top:949.70px;font-size:17.6px;font-weight:400;color:#26292e;transform:scaleX(0.8500)">2</div>
<div class="t" style="left:404.81px;top:996.00px;font-size:17.6px;font-weight:400;color:#26292e;transform:scaleX(1.0444)">hawwwww-007</div>
<div class="t" style="left:676.69px;top:996.00px;font-size:17.6px;font-weight:400;color:#26292e;transform:scaleX(1.0093)">2024-10-30 21:28:28</div>
<div class="t" style="left:1085.70px;top:996.00px;font-size:17.6px;font-weight:400;color:#26292e;transform:scaleX(0.9050)">JP</div>
<div class="t" style="left:1179.40px;top:996.00px;font-size:17.6px;font-weight:400;color:#26292e;transform:scaleX(0.9037)">KIX</div>
<div class="t" style="left:1275.72px;top:996.00px;font-size:17.6px;font-weight:400;color:#26292e;transform:scaleX(0.8833)">PLT</div>
<div class="t" style="left:404.81px;top:1042.30px;font-size:17.6px;font-weight:400;color:#26292e;transform:scaleX(1.0444)">hawwwww-006</div>
<div class="t" style="left:676.69px;top:1042.30px;font-size:17.6px;font-weight:400;color:#26292e;transform:scaleX(1.0093)">2024-10-30 21:28:28</div>
<div class="t" style="left:1085.70px;top:1042.30px;font-size:17.6px;font-weight:400;color:#26292e;transform:scaleX(0.9050)">JP</div>
<div class="t" style="left:1179.40px;top:1042.30px;font-size:17.6px;font-weight:400;color:#26292e;transform:scaleX(0.9037)">KIX</div>
<div class="t" style="left:1275.72px;top:1042.30px;font-size:17.6px;font-weight:400;color:#26292e;transform:scaleX(0.8833)">PLT</div>
<div class="t" style="left:1365.00px;top:1042.30px;font-size:17.6px;font-weight:400;color:#26292e;transform:scaleX(0.8500)">1</div>
<div class="t" style="left:1769.76px;top:422.95px;font-size:15.7px;font-weight:400;color:#26292e;transform:scaleX(0.9403)">미출력</div>
<div class="t" style="left:1890.86px;top:422.95px;font-size:15.7px;font-weight:400;color:#26292e;transform:scaleX(0.9403)">주문접수</div>
<div class="t" style="left:1769.76px;top:469.25px;font-size:15.7px;font-weight:400;color:#26292e;transform:scaleX(0.9403)">미출력</div>
<div class="t" style="left:1890.86px;top:469.25px;font-size:15.7px;font-weight:400;color:#26292e;transform:scaleX(0.9403)">배송완료</div>
<div class="t" style="left:1769.76px;top:515.55px;font-size:15.7px;font-weight:400;color:#26292e;transform:scaleX(0.9403)">미출력</div>
<div class="t" style="left:1890.86px;top:515.55px;font-size:15.7px;font-weight:400;color:#26292e;transform:scaleX(0.9403)">배송완료</div>
<div class="t" style="left:1769.76px;top:561.85px;font-size:15.7px;font-weight:400;color:#26292e;transform:scaleX(0.9403)">미출력</div>
<div class="t" style="left:1890.86px;top:561.85px;font-size:15.7px;font-weight:400;color:#26292e;transform:scaleX(0.9403)">배송완료</div>
<div class="t" style="left:1769.76px;top:608.15px;font-size:15.7px;font-weight:400;color:#26292e;transform:scaleX(0.9403)">미출력</div>
<div class="t" style="left:1890.86px;top:608.15px;font-size:15.7px;font-weight:400;color:#26292e;transform:scaleX(0.9403)">배송완료</div>
<div class="t" style="left:1769.76px;top:654.45px;font-size:15.7px;font-weight:400;color:#26292e;transform:scaleX(0.9403)">미출력</div>
<div class="t" style="left:1890.86px;top:654.45px;font-size:15.7px;font-weight:400;color:#26292e;transform:scaleX(0.9403)">배송완료</div>
<div class="t" style="left:1769.76px;top:700.75px;font-size:15.7px;font-weight:400;color:#26292e;transform:scaleX(0.9403)">미출력</div>
<div class="t" style="left:1890.86px;top:700.75px;font-size:15.7px;font-weight:400;color:#26292e;transform:scaleX(0.9403)">출고완료</div>
<div class="t" style="left:1769.76px;top:747.05px;font-size:15.7px;font-weight:400;color:#26292e;transform:scaleX(0.9403)">미출력</div>
<div class="t" style="left:1890.86px;top:747.05px;font-size:15.7px;font-weight:400;color:#26292e;transform:scaleX(0.9403)">출고완료</div>
<div class="t" style="left:1769.76px;top:793.35px;font-size:15.7px;font-weight:400;color:#26292e;transform:scaleX(0.9403)">미출력</div>
<div class="t" style="left:1890.86px;top:793.35px;font-size:15.7px;font-weight:400;color:#26292e;transform:scaleX(0.9403)">출고완료</div>
<div class="t" style="left:1769.76px;top:839.65px;font-size:15.7px;font-weight:400;color:#26292e;transform:scaleX(0.9403)">미출력</div>
<div class="t" style="left:1890.86px;top:839.65px;font-size:15.7px;font-weight:400;color:#26292e;transform:scaleX(0.9403)">출고완료</div>
<div class="t" style="left:1769.76px;top:885.95px;font-size:15.7px;font-weight:400;color:#26292e;transform:scaleX(0.9403)">미출력</div>
<div class="t" style="left:1890.86px;top:885.95px;font-size:15.7px;font-weight:400;color:#26292e;transform:scaleX(0.9403)">출고완료</div>
<div class="t" style="left:1769.76px;top:932.25px;font-size:15.7px;font-weight:400;color:#26292e;transform:scaleX(0.9403)">미출력</div>
<div class="t" style="left:1890.86px;top:932.25px;font-size:15.7px;font-weight:400;color:#26292e;transform:scaleX(0.9403)">출고완료</div>
<svg class="a" style="left:0;top:1095px" width="20" height="18" viewBox="0 0 20 18"><path d="M0 0V18H8A16 16 0 0 1 0 5z" fill="#c9c9c9"/></svg>
<svg class="a" style="left:2028px;top:1095px" width="20" height="18" viewBox="0 0 20 18"><path d="M20 0V18H12A16 16 0 0 0 20 5z" fill="#c9c9c9"/></svg>
<div class="a" style="left:0;top:0;width:2048px;height:1px;background:#f4f5f6"></div>
<div class="a" style="left:0;top:1px;width:2048px;height:1.5px;background:#1c2029"></div>
<div class="a" style="left:0;top:1px;width:1px;height:66px;background:#3a3f4a"></div>
<div class="a" style="left:2045.5px;top:1px;width:1.5px;height:66px;background:#1c2029"></div>
<div class="a" style="left:2047px;top:1px;width:1px;height:66px;background:#383d48"></div>
</body></html>
